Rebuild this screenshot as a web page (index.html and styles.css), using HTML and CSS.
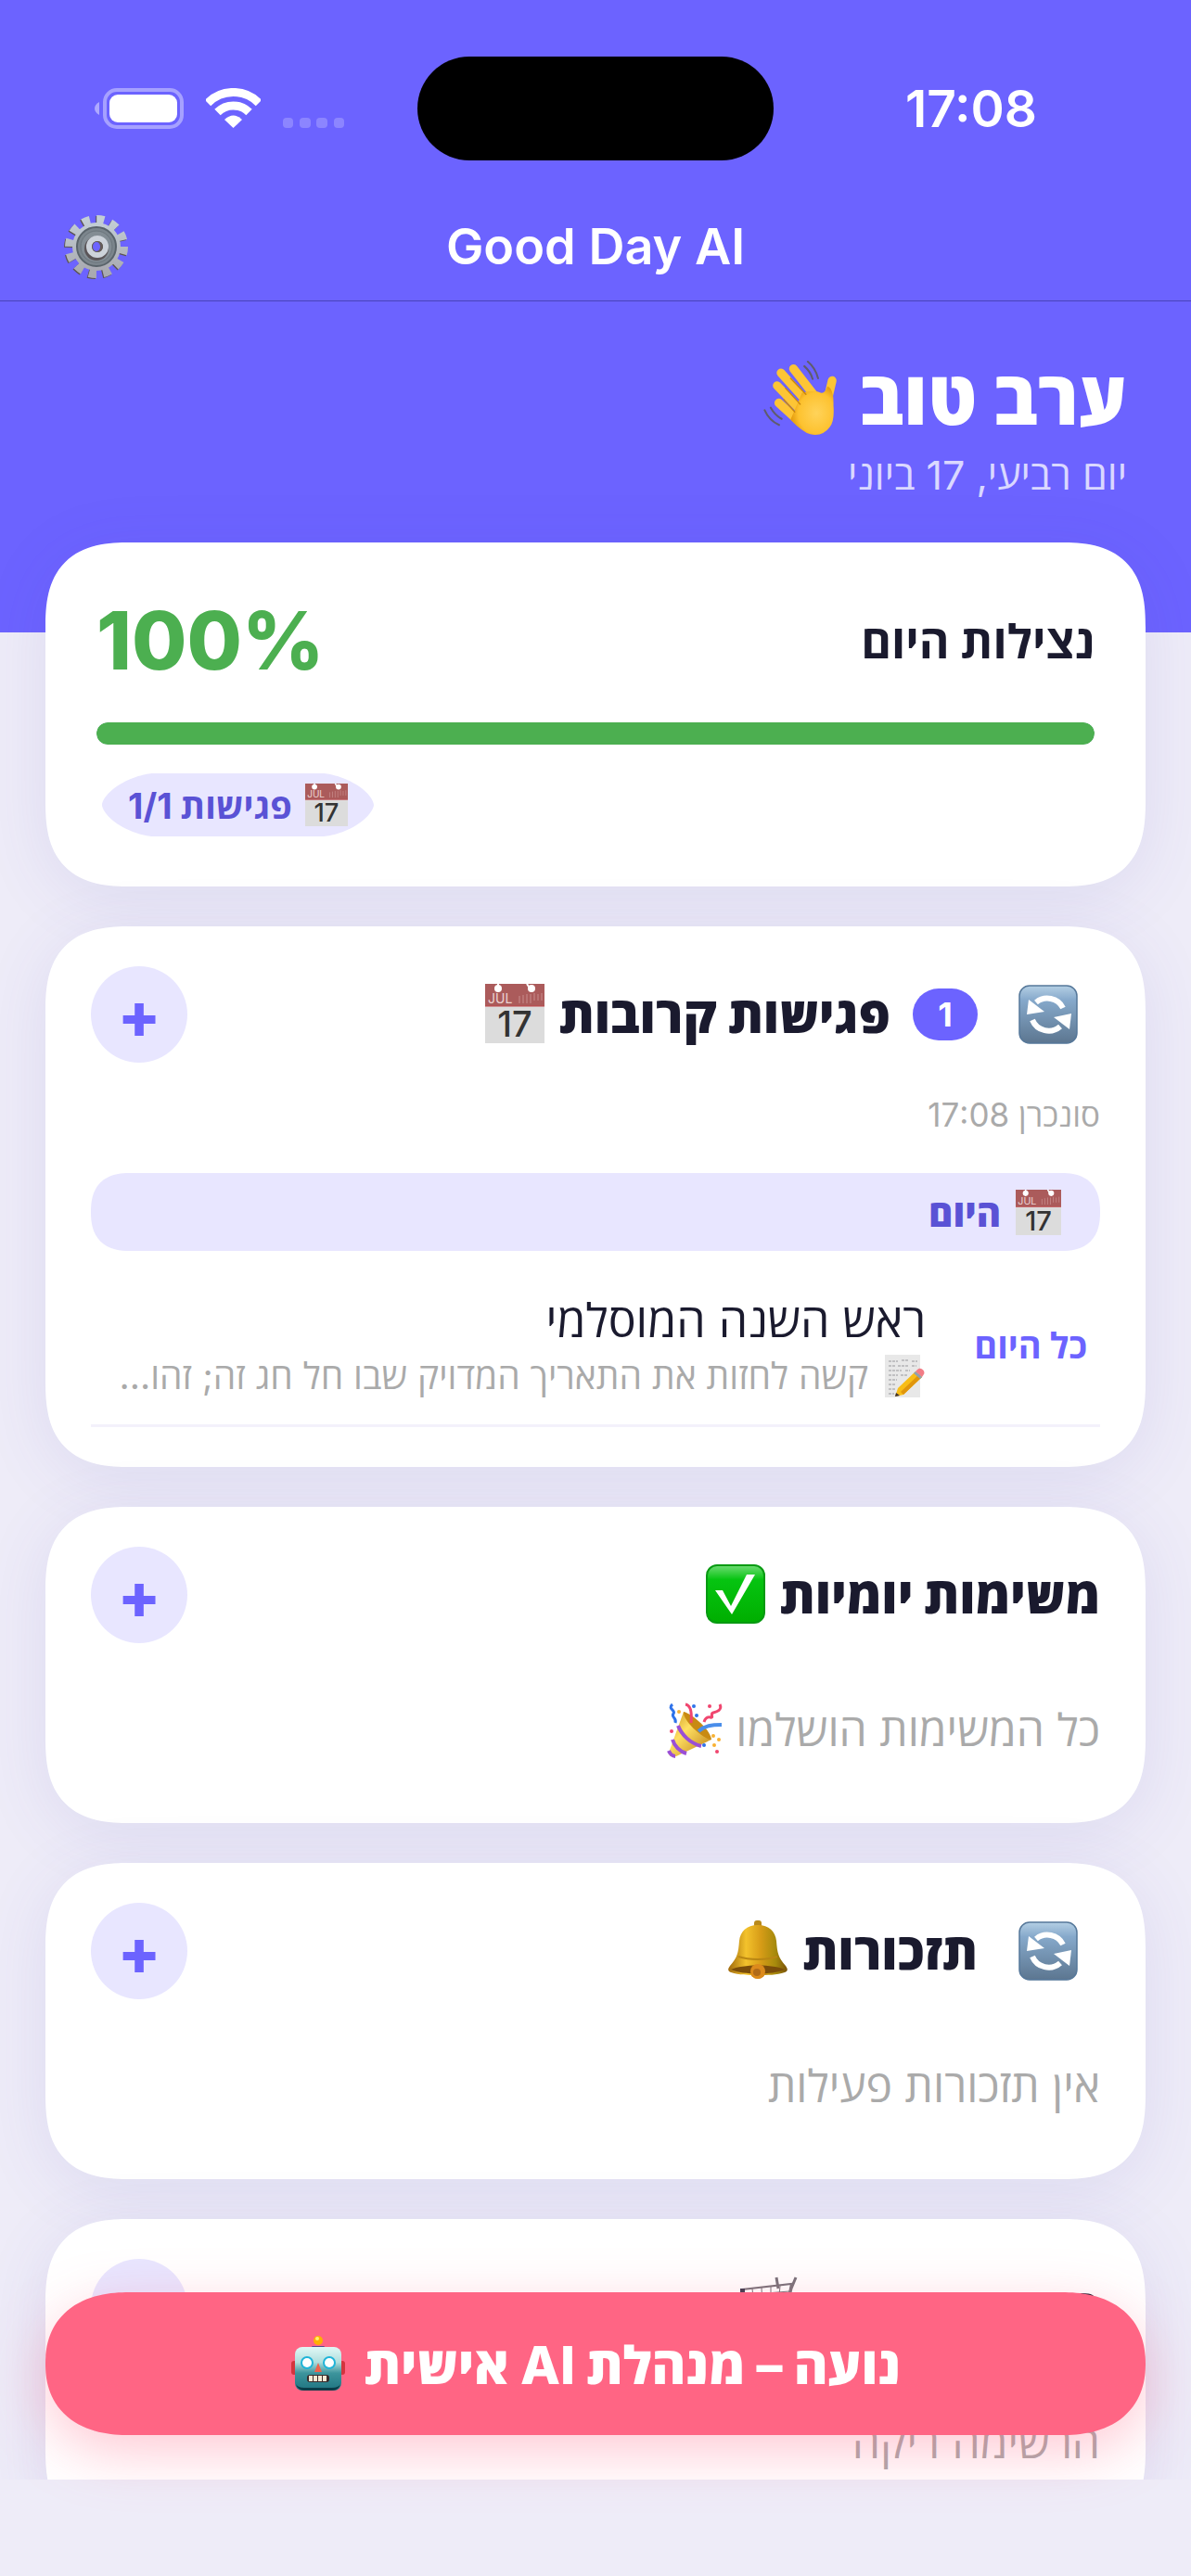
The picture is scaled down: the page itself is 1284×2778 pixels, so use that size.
FILE: index.html
```html
<!DOCTYPE html>
<html lang="he" dir="rtl">
<head>
    <meta charset="UTF-8">
    <meta name="viewport" content="width=device-width, initial-scale=1.0">
    <title>Good Day AI</title>
    <link rel="stylesheet" href="styles.css">
</head>
<body>
    <!-- Icons shared by the cards -->
    <svg class="hidden" aria-hidden="true">
        <symbol id="calendar" viewBox="0 0 64 64">
            <rect width="64" height="64" fill="#dcdcdc"/>
            <rect width="64" height="24" fill="#ab5b5b"/>
            <path d="M0 24h64" stroke="#c04448" stroke-width="1"/>
            <path d="M14 0v5M45 0l4 6" stroke="#fff" stroke-width="2"/>
            <circle cx="14" cy="5" r="4" fill="#fff"/>
            <circle cx="50" cy="5" r="4" fill="#fff"/>
            <path d="M37 13v8M41 12v9M45 11v10M49 11v10M53 10v8M57 11v7M61 10v8" stroke="#c98d8d" stroke-width="1"/>
            <text x="3" y="21" class="cal-month">JUL</text>
            <text x="32" y="57" class="cal-day">17</text>
        </symbol>
    </svg>
    <svg class="sprite" aria-hidden="true">
        <defs>
            <linearGradient id="blueGrad" x1="0" y1="0" x2="0" y2="1">
                <stop offset="0" stop-color="#b4cfe4"/>
                <stop offset="0.25" stop-color="#86a9cb"/>
                <stop offset="1" stop-color="#5c7690"/>
            </linearGradient>
            <linearGradient id="greenGrad" x1="0" y1="0" x2="0" y2="1">
                <stop offset="0" stop-color="#6fdc74"/>
                <stop offset="0.25" stop-color="#06c411"/>
                <stop offset="1" stop-color="#00ae00"/>
            </linearGradient>
            <linearGradient id="bellGrad" x1="0" y1="0" x2="1" y2="0">
                <stop offset="0" stop-color="#a06a0c"/>
                <stop offset="0.3" stop-color="#f3c22c"/>
                <stop offset="0.55" stop-color="#d79c17"/>
                <stop offset="0.8" stop-color="#a68a0c"/>
                <stop offset="1" stop-color="#7a5208"/>
            </linearGradient>
            <linearGradient id="coneGrad" x1="0" y1="0" x2="1" y2="1">
                <stop offset="0" stop-color="#c98f1d"/>
                <stop offset="0.4" stop-color="#ffe062"/>
                <stop offset="1" stop-color="#b97812"/>
            </linearGradient>
            <linearGradient id="robotGrad" x1="0" y1="0" x2="0" y2="1">
                <stop offset="0" stop-color="#e2f8f6"/>
                <stop offset="0.35" stop-color="#b0dedd"/>
                <stop offset="0.6" stop-color="#3c949c"/>
                <stop offset="1" stop-color="#1f7480"/>
            </linearGradient>
            <linearGradient id="gearGrad" x1="0" y1="0" x2="0" y2="1">
                <stop offset="0" stop-color="#c3ced5"/>
                <stop offset="1" stop-color="#a9a9b0"/>
            </linearGradient>
            <radialGradient id="handGrad" cx="0.6" cy="0.55" r="0.6">
                <stop offset="0" stop-color="#ffd35a"/>
                <stop offset="0.7" stop-color="#fdc22f"/>
                <stop offset="1" stop-color="#e39a0c"/>
            </radialGradient>
        </defs>

        <symbol id="refresh" viewBox="0 0 64 64">
            <rect x="1" y="1" width="62" height="62" rx="11" fill="url(#blueGrad)" stroke="#56789a" stroke-width="1.5"/>
            <path d="M48 25A19 19 0 0 0 19 19" fill="none" stroke="#fff" stroke-width="6"/>
            <path d="M9 32l2-16 17 13z" fill="#fff"/>
            <path d="M15 38A19 19 0 0 0 45 45" fill="none" stroke="#fff" stroke-width="6"/>
            <path d="M57 31l-2 17-17-13z" fill="#fff"/>
        </symbol>

        <symbol id="check" viewBox="0 0 64 64">
            <rect x="1" y="1" width="62" height="62" rx="11" fill="url(#greenGrad)" stroke="#089a12" stroke-width="2"/>
            <path d="M10 28h8l9 17 17-34h9L28 54z" fill="#fff"/>
        </symbol>

        <symbol id="bell" viewBox="0 0 64 64">
            <rect x="28" y="0" width="8" height="8" rx="3" fill="#b98a1b"/>
            <circle cx="32" cy="54" r="9" fill="#c87f1a"/>
            <path d="M32 5c-12 0-19 7-20 17-1 13-2 18-10 27-3 4-2 6 1 7 9 3 18 3 29 3s20 0 29-3c3-1 4-3 1-7-8-9-9-14-10-27C51 12 44 5 32 5z" fill="url(#bellGrad)"/>
            <path d="M11 39c12 4 30 4 42 0" fill="none" stroke="#b98613" stroke-width="2"/>
            <path d="M3 53c12-6 46-6 58 0-14 6-44 6-58 0z" fill="#7b4d0a"/>
            <circle cx="32" cy="55" r="8" fill="#dc8a1c"/>
            <circle cx="31" cy="56" r="4" fill="#b06a1a"/>
        </symbol>

        <symbol id="party" viewBox="0 0 60 60">
            <path d="M18 10L2 54q0 6 8 4l38-18z" fill="url(#coneGrad)"/>
            <path d="M18 10c5 0 29 18 30 30-8 0-31-20-30-30z" fill="#c88a13"/>
            <path d="M12 25c4 10 13 19 25 22M6 40c2 7 8 13 15 15M2 52c1 3 4 6 7 6" fill="none" stroke="#9a4fd6" stroke-width="4"/>
            <path d="M6 2c-6 5 4 6 1 10s4 4 2 10" fill="none" stroke="#2f73ea" stroke-width="3"/>
            <path d="M20 2c6 1 7 10 6 20M57 2c3 6-3 8-7 9s1 6-3 5-6 2-7 5" fill="none" stroke="#f0466f" stroke-width="3"/>
            <path d="M34 31c7-6 14-7 25-7" fill="none" stroke="#4a8eea" stroke-width="4"/>
            <g fill="#2f73ea"><circle cx="29" cy="4" r="2"/><circle cx="32" cy="14" r="2"/><circle cx="40" cy="46" r="2"/></g>
            <g fill="#f0466f"><circle cx="46" cy="4" r="2"/><circle cx="5" cy="31" r="2"/><circle cx="54" cy="53" r="2"/></g>
            <g fill="#f8b133"><circle cx="13" cy="10" r="2"/><circle cx="50" cy="36" r="2"/><circle cx="56" cy="40" r="2"/><circle cx="51" cy="46" r="2"/></g>
        </symbol>

        <symbol id="memo" viewBox="0 0 46 46">
            <rect x="2" y="0" width="38" height="46" fill="#e8e8e8"/>
            <path d="M6 7h10M20 6h8M31 7h6M6 12h7M16 12h12M31 12h5M6 17h14M24 17h5M6 22h10M19 22h7M6 27h9M6 32h7M6 37h8M6 42h6" stroke="#98989c" stroke-width="1" stroke-dasharray="3 1"/>
            <path d="M35 18l7 6-20 19-9 2 3-9z" fill="#f8bd17"/>
            <path d="M42 24L22 43l-3-3 20-19z" fill="#e0960d"/>
            <path d="M35 18l2-2c4-4 9 2 7 5l-2 3z" fill="#f27c86"/>
            <path d="M33 20l2-2 7 6-2 2z" fill="#8fa0b2"/>
            <path d="M13 45l1-4 4 3z" fill="#3c3030"/>
        </symbol>

        <symbol id="robot" viewBox="0 0 60 60">
            <rect x="1" y="27" width="6" height="15" rx="3" fill="#d3343e"/>
            <rect x="53" y="27" width="6" height="15" rx="3" fill="#d3343e"/>
            <path d="M23 11h14l-3 5h-8z" fill="#5b4788"/>
            <circle cx="30" cy="5" r="5" fill="#ffb000"/>
            <circle cx="29" cy="3" r="2" fill="#ffef70"/>
            <rect x="5" y="12" width="50" height="47" rx="8" fill="url(#robotGrad)"/>
            <path d="M6 52q2 7 9 7h30q7 0 9-7-2 4-9 4H15q-7 0-9-4z" fill="#0b3c48"/>
            <ellipse cx="18" cy="29" rx="7" ry="7" fill="#1fb4d8"/>
            <ellipse cx="42" cy="29" rx="7" ry="7" fill="#1fb4d8"/>
            <circle cx="18" cy="29" r="5" fill="#fff"/>
            <circle cx="42" cy="29" r="5" fill="#fff"/>
            <path d="M30 29l4 10h-8z" fill="#f0624c"/>
            <rect x="18" y="42" width="24" height="8" rx="3" fill="#3b2b2b"/>
            <path d="M20 46h20" stroke="#f4ead4" stroke-width="6" stroke-dasharray="4 1"/>
        </symbol>

        <symbol id="cart" viewBox="0 0 64 64">
            <path d="M61 1l-5 12-6 26H12M40 1l2 12" fill="none" stroke="#77727a" stroke-width="3"/>
            <path d="M3 14l53-6-5 24-42 2z" fill="none" stroke="#77727a" stroke-width="2"/>
            <path d="M14 13l2 20M24 12l1 21M34 11v21M44 10l-2 22M4 20l50-4M6 27l46-2" stroke="#77727a" stroke-width="1"/>
            <rect x="1" y="13" width="5" height="6" fill="#3d3b50"/>
            <circle cx="16" cy="54" r="4" fill="#55525a"/>
            <circle cx="46" cy="54" r="4" fill="#55525a"/>
        </symbol>
    </svg>

    <div class="status-bar">
        <span class="clock">17:08</span>
        <div class="island"></div>
        <div class="indicators">
            <svg width="96" height="44" viewBox="0 0 96 44">
                <path d="M5 15v14Q0 26 0 22t5-7z" fill="#fff" opacity="0.45"/>
                <rect x="11" y="2" width="83" height="40" rx="13" fill="none" stroke="#fff" stroke-width="4" opacity="0.4"/>
                <rect x="16" y="7" width="73" height="30" rx="9" fill="#fff"/>
            </svg>
            <svg width="59" height="43" viewBox="0 0 59 43">
                <path d="M2 16A38.500 38.500 0 0 1 57 16M12.500 26A24 24 0 0 1 46.500 26" fill="none" stroke="#fff" stroke-width="9"/>
                <path d="M20 34Q29.500 25 39 34L29.500 43z" fill="#fff"/>
            </svg>
            <svg width="67" height="43" viewBox="0 0 67 43" fill="#fff" opacity="0.22">
                <rect x="0" y="32" width="11" height="11" rx="4"/>
                <rect x="18" y="32" width="12" height="11" rx="4"/>
                <rect x="36" y="32" width="12" height="11" rx="4"/>
                <rect x="55" y="32" width="11" height="11" rx="4"/>
            </svg>
        </div>
    </div>

    <header class="navbar">
        <span></span>
        <h1 class="nav-title">Good Day AI</h1>
        <button class="settings" type="button" aria-label="הגדרות">
            <svg width="70" height="70" viewBox="0 0 70 70">
                <circle cx="34" cy="36" r="29" fill="none" stroke="#5a5350" stroke-width="10" stroke-dasharray="8 7.180"/>
                <circle cx="35" cy="35" r="29" fill="none" stroke="url(#gearGrad)" stroke-width="10" stroke-dasharray="8 7.180"/>
                <circle cx="35" cy="35" r="26" fill="url(#gearGrad)"/>
                <circle cx="35" cy="35" r="21" fill="#7b858c" stroke="#59636a" stroke-width="2"/>
                <circle cx="35" cy="35" r="17" fill="#838d94" stroke="#6b757c" stroke-width="1"/>
                <circle cx="35" cy="37" r="13" fill="#5a5558"/>
                <circle cx="36" cy="35" r="9" fill="none" stroke="#cdd3da" stroke-width="6"/>
                <ellipse cx="36" cy="35" rx="6" ry="6" fill="#655c59"/>
                <ellipse cx="35" cy="35" rx="4" ry="5" fill="#6c63ff"/>
            </svg>
        </button>
    </header>

    <main class="scroll">
        <section class="hero">
            <h2 class="greeting">
                <span>ערב טוב</span>
                <svg class="wave" viewBox="0 0 230 232">
                    <g stroke="#fdc535" stroke-width="27" stroke-linecap="round" fill="none">
                        <path d="M93 25l70 90M54 38l90 100M42 78l80 84"/>
                        <path d="M47 132l70 64M214 62l-14 60"/>
                    </g>
                    <path d="M120 100q40-8 58 0 12 5 22-20 20 10 18 60 4 50-12 68-22 30-60 22-24-6-62-46z" fill="url(#handGrad)"/>
                    <path d="M84 55l48 50M68 86l46 50M63 122l34 38" stroke="#c8860e" stroke-width="4" stroke-linecap="round"/>
                    <path d="M138 3q24 20 32 52M127 17q20 18 26 40M3 155q14 32 45 46M22 147q12 22 34 35" fill="none" stroke="#5f5c6c" stroke-width="6" stroke-linecap="round"/>
                </svg>
            </h2>
            <p class="date">יום רביעי, 17 ביוני</p>
        </section>

        <div class="cards">
            <section class="card score-card">
                <div class="score-row">
                    <h3 class="score-label" id="scoreLabel">נצילות היום</h3>
                    <span class="score-value" dir="ltr">100%</span>
                </div>
                <div class="track" role="progressbar" aria-labelledby="scoreLabel" aria-valuenow="100">
                    <div class="fill" style="width: 100%"></div>
                </div>
                <div class="chips">
                    <span class="chip">
                        <svg class="icon-chip"><use href="#calendar"/></svg>
                        <span>פגישות 1/1</span>
                    </span>
                </div>
            </section>

            <section class="card">
                <div class="card-head">
                    <button class="refresh" type="button" aria-label="רענון"><svg class="icon-title"><use href="#refresh"/></svg></button>
                    <span class="badge">1</span>
                    <h3 class="card-title">פגישות קרובות <svg class="icon-title"><use href="#calendar"/></svg></h3>
                    <button class="add" type="button" aria-label="הוספת פגישה">+</button>
                </div>
                <p class="synced">סונכרן 17:08</p>
                <div class="day">
                    <svg class="icon-day"><use href="#calendar"/></svg>
                    <span>היום</span>
                </div>
                <div class="event">
                    <span class="event-time">כל היום</span>
                    <div class="event-body">
                        <p class="event-title">ראש השנה המוסלמי</p>
                        <p class="event-note">
                            <svg class="icon-chip"><use href="#memo"/></svg>
                            <span>קשה לחזות את התאריך המדויק שבו חל חג זה; זהו...</span>
                        </p>
                    </div>
                </div>
            </section>

            <section class="card">
                <div class="card-head">
                    <h3 class="card-title">משימות יומיות <svg class="icon-title"><use href="#check"/></svg></h3>
                    <button class="add" type="button" aria-label="הוספת משימה">+</button>
                </div>
                <p class="empty">כל המשימות הושלמו <svg class="icon-empty"><use href="#party"/></svg></p>
            </section>

            <section class="card">
                <div class="card-head">
                    <button class="refresh" type="button" aria-label="רענון"><svg class="icon-title"><use href="#refresh"/></svg></button>
                    <h3 class="card-title">תזכורות <svg class="icon-title"><use href="#bell"/></svg></h3>
                    <button class="add" type="button" aria-label="הוספת תזכורת">+</button>
                </div>
                <p class="empty">אין תזכורות פעילות</p>
            </section>

            <section class="card">
                <div class="card-head">
                    <h3 class="card-title">רשימת קניות <svg class="icon-title"><use href="#cart"/></svg></h3>
                    <button class="add" type="button" aria-label="הוספת פריט">+</button>
                </div>
                <p class="empty">הרשימה ריקה</p>
            </section>
        </div>
    </main>

    <button class="assistant" type="button">
        <span>נועה – מנהלת AI אישית</span>
        <svg class="icon-empty"><use href="#robot"/></svg>
    </button>
</body>
</html>
```
FILE: styles.css
```css
* {
    box-sizing: border-box;
}

body, h1, h2, h3, p {
    margin: 0;
}

body {
    position: relative;
    display: flex;
    flex-direction: column;
    height: 100vh;
    padding-bottom: 104px;
    overflow: hidden;
    background-color: #eeecf8;
    color: #1a1a2e;
    font-family: Inter, "Open Sans", sans-serif;
}

button {
    padding: 0;
    border: none;
    background: none;
    font-family: inherit;
    cursor: pointer;
}

svg {
    display: block;
    flex-shrink: 0;
}

.sprite {
    position: absolute;
    width: 0;
    height: 0;
}

.hidden {
    display: none;
}

.cal-month {
    font-size: 14px;
    font-weight: 400;
    fill: #ecd3d3;
    direction: ltr;
}

.cal-day {
    font-size: 38px;
    font-weight: 500;
    fill: #333;
    text-anchor: middle;
    direction: ltr;
}

/* Status bar */
.status-bar {
    display: grid;
    grid-template-columns: 1fr 384px 1fr;
    align-items: center;
    justify-items: center;
    padding: 61px 24px 34px;
    background-color: #6c63ff;
}

.clock {
    color: #fff;
    font-size: 55px;
    font-weight: 600;
    line-height: 60px;
}

.island {
    width: 100%;
    height: 112px;
    border-radius: 56px;
    background-color: #000;
}

.indicators {
    display: flex;
    direction: ltr;
    gap: 24px;
}

/* Title bar */
.navbar {
    display: grid;
    grid-template-columns: 1fr auto 1fr;
    align-items: center;
    height: 118px;
    padding: 0 69px;
    background-color: #6c63ff;
    border-bottom: 1px solid #4a43b8;
}

.nav-title {
    color: #fff;
    font-size: 54px;
    font-weight: 600;
    line-height: 64px;
}

.settings {
    justify-self: end;
}

.scroll {
    flex: 1;
    min-height: 0;
    overflow-y: auto;
    scrollbar-width: none;
}

/* Greeting */
.hero {
    padding: 64px 69px 143px;
    background-color: #6c63ff;
    color: #fff;
}

.greeting {
    display: flex;
    align-items: center;
    gap: 24px;
    margin-bottom: 16px;
    font-size: 81px;
    font-weight: 800;
    line-height: 80px;
}

.wave {
    width: 80px;
    height: 80px;
}

.date {
    color: rgba(255, 255, 255, 0.75);
    font-size: 43px;
    line-height: 54px;
}

/* Cards */
.cards {
    display: flex;
    flex-direction: column;
    gap: 43px;
    margin-top: -97px;
    padding: 0 49px 200px;
}

.card {
    padding: 43px 49px;
    border-radius: 66px;
    background-color: #fff;
    box-shadow: 0 12px 72px rgba(74, 66, 180, 0.1);
}

.score-card {
    padding: 54px 55px;
}

.score-row {
    display: flex;
    align-items: center;
    justify-content: space-between;
    height: 104px;
    margin-bottom: 36px;
}

.score-label {
    font-size: 50px;
    font-weight: 700;
}

.score-value {
    color: #4caf50;
    font-size: 86px;
    font-weight: 800;
}

.track {
    height: 24px;
    margin-bottom: 31px;
    border-radius: 12px;
    background-color: #e8e6ff;
    overflow: hidden;
}

.fill {
    height: 100%;
    border-radius: 12px;
    background-color: #4caf50;
}

.chips {
    display: flex;
    justify-content: flex-end;
    padding: 0 6px;
}

.chip {
    display: flex;
    align-items: center;
    gap: 14px;
    height: 68px;
    padding: 0 28px;
    border-radius: 34px;
    background-color: #e8e6ff;
    color: #5a52d5;
    font-size: 38px;
    font-weight: 700;
}

.icon-chip {
    width: 46px;
    height: 46px;
}

.icon-day {
    width: 49px;
    height: 49px;
}

.icon-empty {
    width: 60px;
    height: 60px;
}

.icon-title {
    width: 64px;
    height: 64px;
}

.card-head {
    display: flex;
    align-items: center;
    gap: 24px;
    height: 104px;
}

.card-title {
    display: flex;
    align-items: center;
    gap: 16px;
    padding-bottom: 2px;
    font-size: 54px;
    font-weight: 800;
}

.refresh {
    padding-inline: 24px 20px;
}

.badge {
    min-width: 70px;
    height: 56px;
    border-radius: 28px;
    background-color: #6c63ff;
    color: #fff;
    font-size: 36px;
    font-weight: 700;
    line-height: 56px;
    text-align: center;
}

.add {
    width: 104px;
    height: 104px;
    margin-inline-start: auto;
    border-radius: 50%;
    background-color: #e8e6ff;
    color: #6c63ff;
    font-size: 68px;
    font-weight: 800;
    line-height: 100px;
}

.synced {
    margin: 36px 0 43px;
    color: #aaa;
    font-size: 35px;
    line-height: 40px;
}

.day {
    display: flex;
    align-items: center;
    gap: 16px;
    height: 84px;
    padding: 0 42px;
    border-radius: 33px;
    background-color: #e8e6ff;
    color: #5a52d5;
    font-size: 40px;
    font-weight: 800;
}

.event {
    display: flex;
    align-items: center;
    gap: 52px;
    padding: 45px 14px 25px;
    border-bottom: 3px solid #f3f1fb;
}

.event-time {
    padding-bottom: 6px;
    color: #6c63ff;
    font-size: 38px;
    font-weight: 700;
    white-space: nowrap;
}

.event-title {
    margin-bottom: 3px;
    font-size: 50px;
    line-height: 60px;
}

.event-note {
    display: flex;
    align-items: center;
    gap: 16px;
    color: #aaa;
    font-size: 39px;
    line-height: 54px;
    white-space: nowrap;
}

.empty {
    display: flex;
    align-items: center;
    gap: 14px;
    padding: 64px 0 27px;
    color: #aaa;
    font-size: 48px;
    line-height: 60px;
}

/* Assistant button floating over the list */
.assistant {
    position: absolute;
    right: 49px;
    bottom: 152px;
    left: 49px;
    display: flex;
    align-items: center;
    justify-content: center;
    gap: 20px;
    height: 154px;
    border-radius: 77px;
    background-color: #ff6584;
    box-shadow: 0 18px 60px rgba(255, 101, 132, 0.35);
    color: #fff;
    font-size: 56px;
    font-weight: 800;
}

/* Smoother corners where the browser can draw them */
@supports (corner-shape: squircle) {
    .card {
        border-radius: 92px;
        corner-shape: superellipse(1.4);
    }

    .day {
        border-radius: 42px;
        corner-shape: superellipse(1.3);
    }

    .chip {
        border-radius: 56px / 34px;
        corner-shape: superellipse(0.7);
    }

    .assistant {
        border-radius: 90px / 77px;
        corner-shape: superellipse(1.2);
    }
}
```
